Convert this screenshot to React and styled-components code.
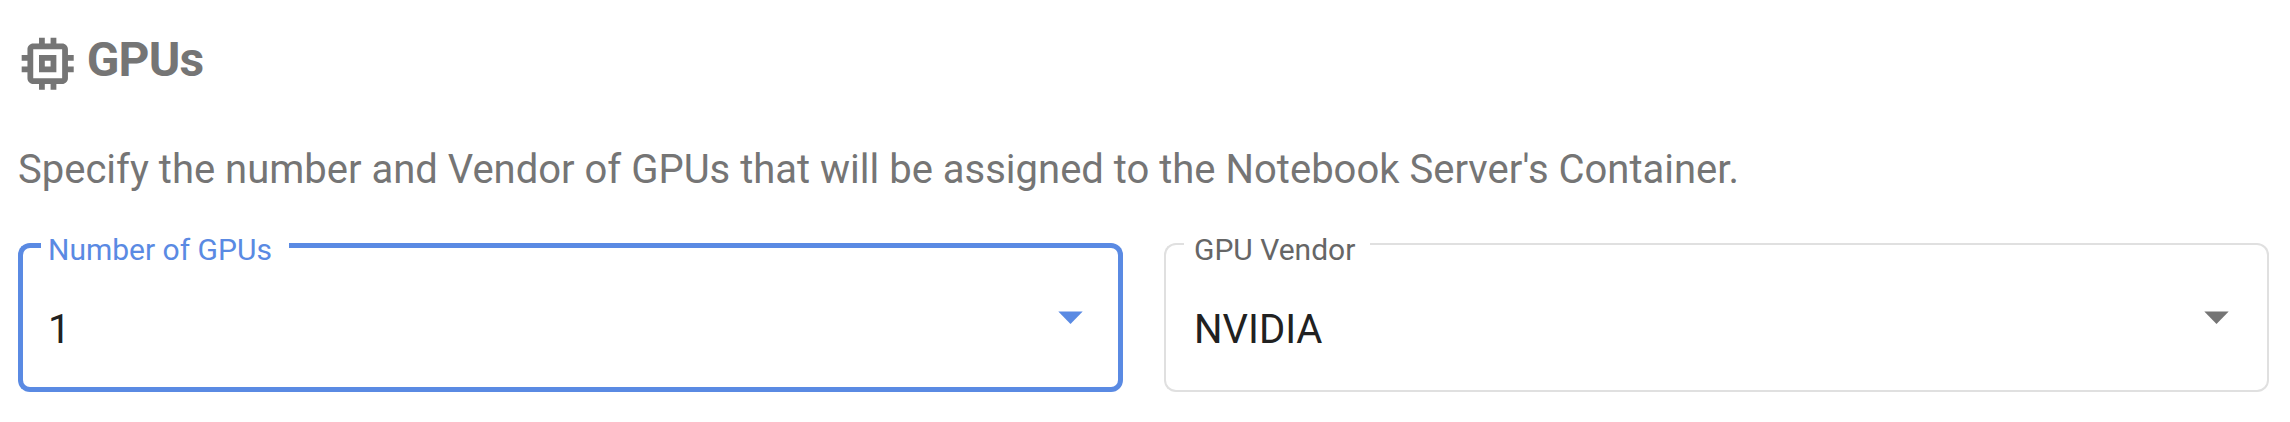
import React from "react";
import styled, { createGlobalStyle } from "styled-components";

const GlobalStyle = createGlobalStyle`
  * { box-sizing: border-box; }
  body { margin: 0; background: #fff; font-family: Roboto, sans-serif; }
`;

const Section = styled.section`
  width: 2290px;
  height: 422px;
  padding: 29px 21px 0 18px;
  overflow: hidden;
`;

const Heading = styled.h3`
  display: flex;
  align-items: flex-start;
  height: 111px;
  margin: 0 0 0 -4.7px;
  font-size: 48px;
  font-weight: 700;
  line-height: 62px;
  letter-spacing: -0.8px;
  color: #757575;
`;

const ChipIcon = styled.svg`
  width: 69.4px;
  height: 69.4px;
  margin-right: 4px;
  fill: #757575;
`;

const Description = styled.p`
  height: 103px;
  margin: 0;
  font-size: 40px;
  line-height: 60px;
  color: #757575;
  white-space: nowrap;
`;

const Fields = styled.div`
  display: grid;
  grid-template-columns: 1fr 1fr;
  column-gap: 41px;
`;

const Field = styled.div`
  --line: ${(p) => (p.$focused ? "#5a8ae3" : "#e0e0e0")};
  --stroke: ${(p) => (p.$focused ? "5px" : "2px")};
  position: relative;
  display: flex;
  align-items: flex-start;
  justify-content: space-between;
  height: 149px;
  padding: 63px 40px 0 30px;
`;

const Outline = styled.div`
  position: absolute;
  inset: 0;
  display: flex;
  pointer-events: none;
`;

const OutlineStart = styled.div`
  width: ${(p) => p.$width}px;
  border: var(--stroke) solid var(--line);
  border-right: 0;
  border-radius: 12px 0 0 12px;
`;

const OutlineNotch = styled.div`
  width: ${(p) => p.$width}px;
  border-bottom: var(--stroke) solid var(--line);
`;

const OutlineEnd = styled.div`
  flex: 1;
  border: var(--stroke) solid var(--line);
  border-left: 0;
  border-radius: 0 12px 12px 0;
`;

const Label = styled.label`
  position: absolute;
  top: -13px;
  left: 30px;
  font-size: 30px;
  line-height: 40px;
  color: ${(p) => (p.$focused ? "#5a8ae3" : "#666")};
  white-space: nowrap;
`;

const Value = styled.span`
  font-size: 40px;
  line-height: 48px;
  color: #212121;
`;

const Arrow = styled.svg`
  width: 25px;
  height: 13px;
  margin-top: 5px;
  fill: ${(p) => (p.$focused ? "#5a8ae3" : "#757575")};
`;

function SelectField({ label, value, focused, start, notch }) {
  return (
    <Field $focused={focused}>
      <Outline>
        <OutlineStart $width={start} />
        <OutlineNotch $width={notch} />
        <OutlineEnd />
      </Outline>
      <Label $focused={focused}>{label}</Label>
      <Value>{value}</Value>
      <Arrow $focused={focused} viewBox="0 0 25 13">
        <path d="M.3.6h24.4L12.5 12.9z" />
      </Arrow>
    </Field>
  );
}

export default function App() {
  return (
    <Section>
      <GlobalStyle />
      <Heading>
        <ChipIcon viewBox="0 0 24 24">
          <path d="M15 9H9v6h6V9zm-2 4h-2v-2h2v2zm8-2V9h-2V7c0-1.1-.9-2-2-2h-2V3h-2v2h-2V3H9v2H7c-1.1 0-2 .9-2 2v2H3v2h2v2H3v2h2v2c0 1.1.9 2 2 2h2v2h2v-2h2v2h2v-2h2c1.1 0 2-.9 2-2v-2h2v-2h-2v-2h2zm-4 6H7V7h10v10z" />
        </ChipIcon>
        GPUs
      </Heading>
      <Description>
        Specify the number and Vendor of GPUs that will be assigned to the Notebook Server's Container.
      </Description>
      <Fields>
        <SelectField label="Number of GPUs" value="1" focused start={23} notch={248} />
        <SelectField label="GPU Vendor" value="NVIDIA" start={20} notch={186} />
      </Fields>
    </Section>
  );
}
